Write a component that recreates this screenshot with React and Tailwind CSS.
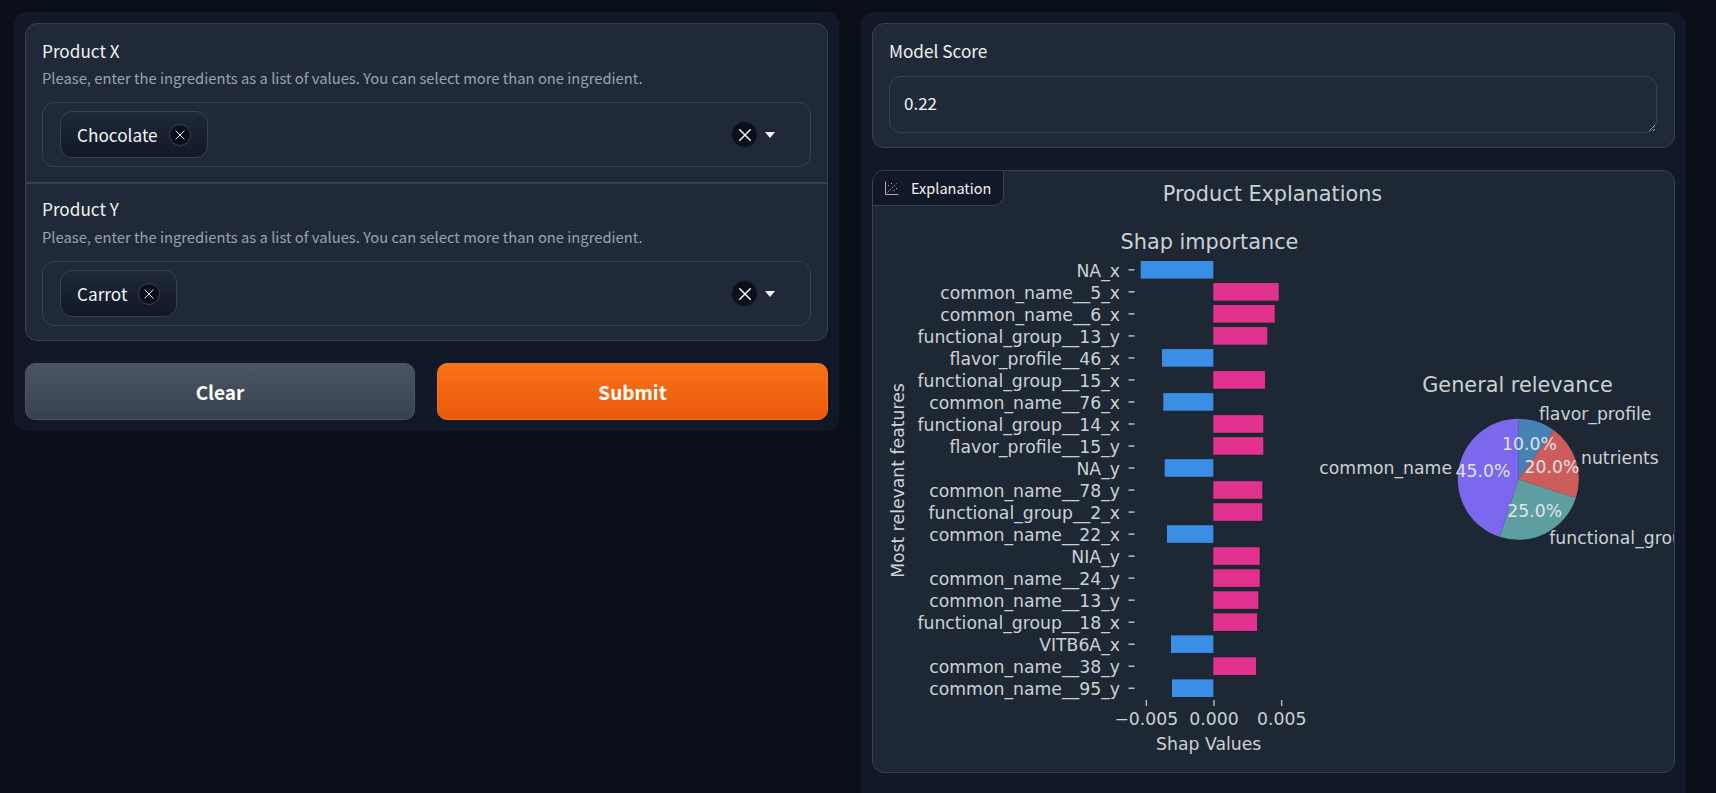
import React from 'react';

const ui = { fontFamily: '"Noto Sans CJK SC", "Noto Sans", sans-serif' };

const shap = [
  ['NA_x', 1140.7], ['common_name__5_x', 1278.7], ['common_name__6_x', 1274.7],
  ['functional_group__13_y', 1267.3], ['flavor_profile__46_x', 1162], ['functional_group__15_x', 1265],
  ['common_name__76_x', 1163.3], ['functional_group__14_x', 1263.3], ['flavor_profile__15_y', 1263.3],
  ['NA_y', 1164.7], ['common_name__78_y', 1262.3], ['functional_group__2_x', 1262.3],
  ['common_name__22_x', 1167], ['NIA_y', 1259.7], ['common_name__24_y', 1259.7],
  ['common_name__13_y', 1258.3], ['functional_group__18_x', 1257], ['VITB6A_x', 1171],
  ['common_name__38_y', 1256], ['common_name__95_y', 1172],
];

const ZERO = 1213.3;

// point on the pie, fraction measured clockwise from the top
const pt = (f) => {
  const a = f * 2 * Math.PI;
  return `${1518.3 + 60.5 * Math.sin(a)} ${479.3 - 60.5 * Math.cos(a)}`;
};
const slice = (from, to) => `M1518.3 479.3 L${pt(from)} A60.5 60.5 0 ${to - from > 0.5 ? 1 : 0} 1 ${pt(to)} Z`;

const Chart = () => (
  <svg viewBox="873 171 801 601" className="block w-full h-[601px]" fill="#ccd1d6" fontFamily='"DejaVu Sans", sans-serif'>
    <text x="1272.5" y="201" fontSize="20.8" textAnchor="middle">Product Explanations</text>
    <text x="1209.5" y="249" fontSize="20.8" textAnchor="middle">Shap importance</text>
    {shap.map(([name, end], i) => {
      const y = 261 + i * 22.02;
      const neg = end < ZERO;
      return (
        <g key={name}>
          <text x="1120" y={y + 15.7} fontSize="17.25" textAnchor="end">{name}</text>
          <rect x="1128.5" y={y + 8.2} width="6" height="1.3" />
          <rect x={neg ? end : ZERO} y={y} width={Math.abs(end - ZERO)} height="17.6" fill={neg ? '#3a8ee6' : '#e3318f'} />
        </g>
      );
    })}
    {[['\u22120.005', 1146.3], ['0.000', 1214], ['0.005', 1281.7]].map(([t, x]) => (
      <g key={t}>
        <rect x={x - 0.6} y="700" width="1.2" height="6" />
        <text x={x} y="725" fontSize="17.25" textAnchor="middle">{t}</text>
      </g>
    ))}
    <text x="1208.7" y="750" fontSize="17.25" textAnchor="middle">Shap Values</text>
    <text transform="translate(904 480.5) rotate(-90)" fontSize="17.25" textAnchor="middle">Most relevant features</text>

    <text x="1517.5" y="392" fontSize="20.8" textAnchor="middle">General relevance</text>
    <path d={slice(0, 0.1)} fill="#4682b4" />
    <path d={slice(0.1, 0.3)} fill="#cd5c5c" />
    <path d={slice(0.3, 0.55)} fill="#5f9ea0" />
    <path d={slice(0.55, 1)} fill="#7b68ee" />
    <text x="1539" y="420" fontSize="17.25">flavor_profile</text>
    <text x="1581" y="464" fontSize="17.25">nutrients</text>
    <text x="1452" y="474" fontSize="17.25" textAnchor="end">common_name</text>
    <text x="1549.3" y="544.3" fontSize="17.25">functional_group</text>
    <g fill="#e0e3e8" fontSize="17.25" textAnchor="middle">
      <text x="1529.5" y="449.5">10.0%</text>
      <text x="1552" y="472.7">20.0%</text>
      <text x="1483" y="477">45.0%</text>
      <text x="1534.7" y="516.7">25.0%</text>
    </g>
  </svg>
);

const Cross = ({ size, stroke = 1.6 }) => (
  <svg width={size} height={size} viewBox="0 0 24 24" fill="none" stroke="#f3f4f6" strokeWidth={stroke} strokeLinecap="round">
    <path d="M5 5L19 19M19 5L5 19" />
  </svg>
);

const IngredientField = ({ label, value, divider }) => (
  <div className={`px-[16px] pb-[15px] ${divider ? 'pt-[15px] border-b-2 border-[#374151]' : 'pt-[13px]'}`}>
    <div className="text-[17.2px] leading-[24px] text-[#f0f1f3]">{label}</div>
    <div className={`${divider ? 'mt-[5px]' : 'mt-[6px]'} text-[14.75px] leading-[20px] text-[#9ca3af]`}>
      Please, enter the ingredients as a list of values. You can select more than one ingredient.
    </div>
    <div className="mt-[14px] h-[65px] rounded-[12px] border border-[#374151] bg-[#1f2937] pl-[17px] pr-[35px] flex items-center justify-between">
      <div className="h-[47px] rounded-[12px] border border-[#374151] bg-gradient-to-b from-[#1f2937] to-[#111827] px-[16px] flex items-center gap-[11px] text-[17.2px] text-[#f3f4f6]">
        {value}
        <span className="w-[22px] h-[22px] rounded-full bg-[#0b0f19] border border-[#374151] flex items-center justify-center">
          <Cross size={14} />
        </span>
      </div>
      <div className="flex items-center gap-[7px]">
        <span className="w-[27px] h-[27px] rounded-full bg-[#0b0f19] border border-[#1f2937] flex items-center justify-center">
          <Cross size={18} stroke={2} />
        </span>
        <span className="w-0 h-0 border-l-[5.5px] border-r-[5.5px] border-t-[6px] border-l-transparent border-r-transparent border-t-[#f3f4f6]" />
      </div>
    </div>
  </div>
);

const App = () => (
  <div className="h-[793px] overflow-hidden bg-[#0b0f19] pl-[14px] pt-[12px] flex gap-[22px]" style={ui}>
    <div className="w-[825px] h-[419px] rounded-[12px] bg-[#111827] p-[11px] flex flex-col gap-[22px]">
      <div className="h-[318px] rounded-[12px] border border-[#374151] bg-[#1f2937] overflow-hidden">
        <IngredientField label="Product X" value="Chocolate" divider />
        <IngredientField label="Product Y" value="Carrot" />
      </div>
      <div className="flex gap-[22px]">
        <button className="w-[390px] h-[57px] pt-[2px] rounded-[10px] border border-[#4b5563] bg-gradient-to-b from-[#4b5563] to-[#374151] text-[19px] font-semibold text-white">Clear</button>
        <button className="flex-1 h-[57px] pt-[2px] rounded-[10px] border border-[#f97316] bg-gradient-to-b from-[#f97316] to-[#ea580c] text-[19px] font-semibold text-white">Submit</button>
      </div>
    </div>

    <div className="w-[825px] h-[793px] rounded-t-[12px] bg-[#111827] p-[11px] flex flex-col gap-[22px]">
      <div className="h-[125px] rounded-[12px] border border-[#374151] bg-[#1f2937] pl-[16px] pr-[17px] pt-[15px]">
        <div className="text-[17.2px] leading-[24px] text-[#f0f1f3]">Model Score</div>
        <textarea
          readOnly
          value="0.22"
          className="mt-[13px] block w-full h-[57px] resize rounded-[12px] border border-[#374151] bg-[#1f2937] px-[14px] py-[14px] text-[17px] leading-[24px] text-[#f3f4f6] outline-none [color-scheme:dark]"
        />
      </div>
      <div className="relative h-[603px] rounded-[12px] border border-[#374151] bg-[#1e2835] overflow-hidden">
        <div className="absolute left-0 top-0 h-[35px] w-[131px] rounded-br-[10px] border-r border-b border-[#374151] bg-[#111827] flex items-center pl-[12px] gap-[12px] text-[14.5px] text-[#f0f1f3]">
          <svg width="14" height="14" viewBox="0 0 14 14" fill="none" stroke="#b6bcc5" strokeWidth="0.9">
            <path d="M0.5 0.5V13.5H13.5" />
            <path d="M2.5 11.5L11.5 2.5" strokeDasharray="1.5 1.5" />
            <path d="M3 4.5h1M6 2.5h1M8.5 9.5h1M11 7.5h1" strokeWidth="1.2" />
          </svg>
          Explanation
        </div>
        <Chart />
      </div>
    </div>
  </div>
);

export default App;
